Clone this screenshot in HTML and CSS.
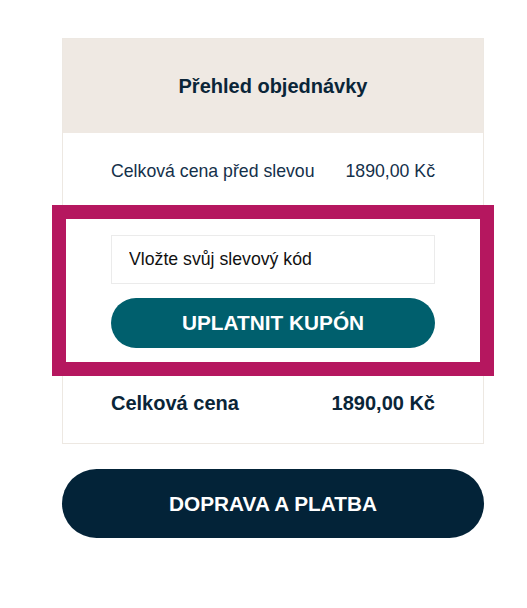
FILE: index.html
```html
<!DOCTYPE html>
<html lang="cs">
<head>
<meta charset="utf-8">
<title>Přehled objednávky</title>
<link rel="stylesheet" href="styles.css">
</head>
<body>
<div class="page">
  <section class="card">
    <header class="card-head">
      <h2 class="card-title">Přehled objednávky</h2>
    </header>
    <div class="row row-sub">
      <span>Celková cena před slevou</span>
      <span>1890,00 Kč</span>
    </div>
    <div class="coupon">
      <input class="coupon-input" type="text" placeholder="Vložte svůj slevový kód">
      <button class="btn btn-coupon" type="button">UPLATNIT KUPÓN</button>
    </div>
    <div class="row row-total">
      <span>Celková cena</span>
      <span>1890,00 Kč</span>
    </div>
  </section>
  <button class="btn btn-next" type="button">DOPRAVA A PLATBA</button>
</div>
</body>
</html>
```
FILE: styles.css
```css
* { box-sizing: border-box; }
html, body { margin: 0; padding: 0; background: #fff; }
body {
  font-family: "Liberation Sans", Arial, sans-serif;
  color: #0c2639;
}
.page {
  padding: 38px 0 0 62px;
  width: 484px;
}
.card {
  border: 1px solid #ede8e2;
  background: #fff;
}
.card-head {
  background: #efe9e3;
  height: 94px;
  display: flex;
  align-items: center;
  justify-content: center;
}
.card-title {
  margin: 0;
  font-size: 20px;
  font-weight: bold;
  line-height: 24px;
  color: #0a2538;
}
.row {
  display: flex;
  justify-content: space-between;
  padding-left: 48px;
  padding-right: 48px;
}
.row-sub {
  padding-top: 28px;
  padding-bottom: 35px;
  font-size: 17.7px;
  line-height: 20px;
  color: #14304a;
}
.row-total {
  padding-top: 26px;
  padding-bottom: 28px;
  font-size: 20px;
  line-height: 24px;
  font-weight: bold;
  color: #0a2538;
}
.coupon {
  padding: 19px 48px 17px;
  display: flex;
  flex-direction: column;
  gap: 14px;
  outline: 14px solid #b5175f;
  outline-offset: -3px;
}
.coupon-input {
  height: 49px;
  width: 100%;
  border: 1px solid #ebebeb;
  padding: 0 17px;
  font-family: "Liberation Sans", Arial, sans-serif;
  font-size: 17.7px;
  color: #111;
  background: #fff;
  outline: none;
}
.coupon-input::placeholder { color: #111; opacity: 1; }
.btn {
  display: block;
  border: none;
  font-family: "Liberation Sans", Arial, sans-serif;
  font-weight: bold;
  font-size: 20.8px;
  color: #fff;
  cursor: pointer;
  border-radius: 999px;
}
.btn-coupon {
  height: 50px;
  width: 100%;
  background: #005f6d;
}
.btn-next {
  margin-top: 25px;
  width: 422px;
  height: 69px;
  background: #032338;
}
```
